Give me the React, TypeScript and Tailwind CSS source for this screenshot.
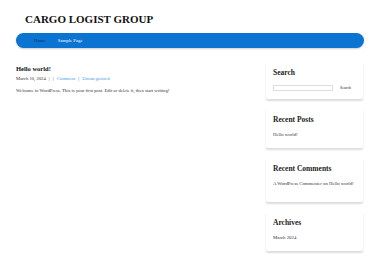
import React from 'react';

const serif = { fontFamily: '"Liberation Serif", "Times New Roman", serif' };

function Widget({ title, pb = 'pb-[10px]', children }: { title: string; pb?: string; children: React.ReactNode }) {
  return (
    <section className={`rounded-[2px] bg-white px-[7px] pt-[7px] shadow-[0_2px_2px_rgba(0,0,0,0.14)] ${pb}`}>
      <h2 className="mb-[6px] text-[7.5px] font-bold leading-[10px] text-[#222]">{title}</h2>
      {children}
    </section>
  );
}

export default function App() {
  return (
    <div className="h-[260px] w-[380px] overflow-hidden bg-white text-[#222]" style={serif}>
      {/* Header */}
      <header className="px-[25px] pt-[11px]">
        <h1 className="text-[11px] font-bold leading-[16px] text-[#111]">CARGO LOGIST GROUP</h1>
      </header>

      {/* Nav */}
      <nav className="mx-[16px] mt-[6px] flex h-[15px] items-center gap-[12px] rounded-full bg-[#0b73d1] pl-[18px] text-[4.8px] shadow-[0_1px_2px_rgba(0,0,0,0.2)]">
        <a className="text-[#0b2e6e]">Home</a>
        <a className="text-white">Sample Page</a>
      </nav>

      <div className="mt-[11px] flex gap-[13px] pl-[16px] pr-[17px]">
        {/* Main */}
        <main className="flex-1 pt-[5px]">
          <h2 className="text-[6.5px] font-bold leading-[9px] text-[#111]">Hello world!</h2>
          <div className="mt-[2px] flex items-center gap-[3px] text-[4.7px] leading-[7px] text-[#333]">
            <span>March 10, 2024</span>
            <span>|</span>
            <span>|</span>
            <a className="text-[#3a9be8]">Comment</a>
            <span>|</span>
            <a className="text-[#3a9be8]">Uncategorized</a>
          </div>
          <p className="mt-[5px] text-[4.7px] leading-[7px] text-[#333]">
            Welcome to WordPress. This is your first post. Edit or delete it, then start writing!
          </p>
        </main>

        {/* Sidebar */}
        <aside className="flex w-[97px] flex-col gap-[9px] pt-[2px]">
          <Widget title="Search" pb="pb-[8px]">
            <div className="flex items-center gap-[2px]">
              <div className="h-[6px] w-[60px] border border-[#ddd] bg-white" />
              <button className="h-[7px] flex-1 bg-white text-[4px] leading-[7px] text-[#222]">Search</button>
            </div>
          </Widget>
          <Widget title="Recent Posts">
            <p className="text-[4.8px] leading-[7px] text-[#333]">Hello world!</p>
          </Widget>
          <Widget title="Recent Comments" pb="pb-[15px]">
            <p className="text-[4.8px] leading-[7px] text-[#333]">A WordPress Commenter on Hello world!</p>
          </Widget>
          <Widget title="Archives">
            <p className="text-[4.8px] leading-[7px] text-[#333]">March 2024</p>
          </Widget>
        </aside>
      </div>
    </div>
  );
}
